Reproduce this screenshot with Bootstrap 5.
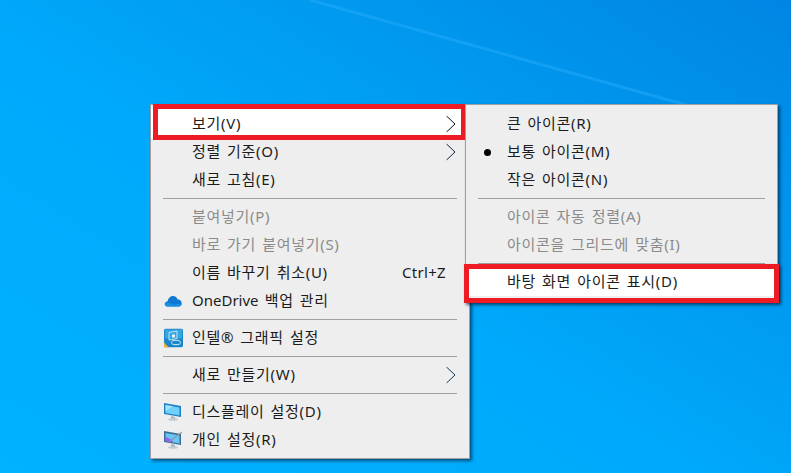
<!DOCTYPE html>
<html lang="ko">
<head>
    <meta charset="UTF-8">
    <meta name="viewport" content="width=device-width, initial-scale=1.0">
    <title>바탕 화면 아이콘 표시</title>
    <link href="https://cdn.jsdelivr.net/npm/bootstrap@5.3.0/dist/css/bootstrap.min.css" rel="stylesheet">
    <style>
        html, body {
            height: 100%;
            overflow: hidden;
        }
        body {
            font-family: "Noto Sans", "Noto Sans CJK KR", sans-serif;
        }
        .desk {
            position: relative;
            width: 791px;
            height: 473px;
            overflow: hidden;
            background: linear-gradient(32deg, #00b2ff 0%, #00a9fb 45%, #0098ee 72%, #0085e3 100%);
        }
        .desk-ray {
            position: absolute;
            inset: 0;
        }
        /* контекстное меню */
        .ctx-menu {
            --bs-dropdown-min-width: 0;
            --bs-dropdown-padding-x: 0;
            --bs-dropdown-padding-y: 4px;
            --bs-dropdown-border-radius: 0;
            --bs-dropdown-border-color: #a0a0a0;
            --bs-dropdown-bg: #eeeeee;
            --bs-dropdown-font-size: 15px;
            position: absolute;
            top: 104px;
            margin: 0;
            box-shadow: 2px 2px 3px rgba(0, 30, 60, .65);
        }
        .ctx-main {
            left: 150px;
            width: 320px;
        }
        .ctx-sub {
            left: 465px;
            width: 313px;
        }
        .ctx-item {
            position: relative;
            height: 28px;
            padding: 0 13px 0 41px;
            color: #1c1c1c;
            line-height: 26px;
            letter-spacing: .7px;
            word-spacing: 1.5px;
            white-space: pre;
        }
        .ctx-item.first-row {
            height: 29px;
            padding-top: 1px;
        }
        .ctx-item.off {
            color: #8b8b8b;
        }
        .ctx-sep {
            height: 1px;
            margin: 4px 12px;
            background: #a0a0a0;
            opacity: 1;
            border: 0;
        }
        .ctx-icon {
            position: absolute;
            left: 13px;
            top: 50%;
            transform: translateY(-50%);
        }
        .ctx-arrow {
            position: absolute;
            right: 13px;
            top: 50%;
            transform: translateY(-50%);
        }
        .latin-run {
            letter-spacing: 0;
        }
        .shortcut {
            margin-left: auto;
            margin-right: 10px;
            letter-spacing: .3px;
        }
        .dot-mark {
            position: absolute;
            left: 18px;
            top: 11px;
            width: 7px;
            height: 7px;
            border-radius: 50%;
            background: #000;
        }
        /* красные рамки поверх пунктов */
        .hot {
            background: #fff;
        }
        .hot::after {
            content: "";
            position: absolute;
            border: 5px solid #ed1c24;
            pointer-events: none;
        }
        .hot-view::after {
            inset: -5px 3px -2px 2px;
        }
        .hot-show::after {
            inset: -4px -2px -7px -2px;
            box-shadow: 2px 2px 3px rgba(0, 30, 60, .6);
        }
    </style>
</head>
<body>
    <div class="desk">
        <svg class="desk-ray" width="791" height="473" viewBox="0 0 791 473">
            <line x1="310" y1="0" x2="690" y2="106" stroke="#2fb2ff" stroke-width="3" opacity=".4"/>
        </svg>

        <!-- Основное меню -->
        <div class="dropdown-menu d-block ctx-menu ctx-main">
            <div class="ctx-item first-row d-flex hot hot-view"><span>보기(V)</span>
                <svg class="ctx-arrow" width="10" height="17" viewBox="0 0 10 17"><path d="M.5.5 9 8.500.5 16.500" fill="none" stroke="#111" stroke-width="1"/></svg>
            </div>
            <div class="ctx-item d-flex"><span>정렬 기준(O)</span>
                <svg class="ctx-arrow" width="10" height="17" viewBox="0 0 10 17"><path d="M.5.5 9 8.500.5 16.500" fill="none" stroke="#14233f" stroke-width="1"/></svg>
            </div>
            <div class="ctx-item d-flex"><span>새로 고침(E)</span></div>
            <hr class="ctx-sep">
            <div class="ctx-item d-flex off"><span>붙여넣기(P)</span></div>
            <div class="ctx-item d-flex off"><span>바로 가기 붙여넣기(S)</span></div>
            <div class="ctx-item d-flex"><span>이름 바꾸기 취소(U)</span><span class="shortcut">Ctrl+Z</span></div>
            <div class="ctx-item d-flex">
                <svg class="ctx-icon" width="18" height="12" viewBox="0 0 18 12">
                    <path d="M3.500 11.500C1.500 11.500.5 10 .8 8.600 1.100 7.200 2.300 6.500 3.500 6.600 4 3.600 6.200 1 9 1c2.200 0 4 1.300 4.700 3.500 2.300-.2 3.800 1.700 4 3.500.2 2-1 3.500-3 3.500z" fill="#0f78d4"/>
                    <path d="M3.500 11.500C1.500 11.500.5 10 .8 8.600c2.500-1.500 6-.8 8 1.300 2-1 5-1.200 8.800-.7-.4 1.300-1.500 2.300-3.200 2.300z" fill="#1a8fe3"/>
                </svg>
                <span><span class="latin-run">OneDrive</span> 백업 관리</span>
            </div>
            <hr class="ctx-sep">
            <div class="ctx-item d-flex">
                <svg class="ctx-icon" width="19" height="19" viewBox="0 0 19 19">
                    <rect width="19" height="19" rx="2" fill="#1b86c9"/>
                    <rect x="1" y="1" width="17" height="9" fill="#35a6e0"/>
                    <path d="M0 14 5 19H0z" fill="#f0b030"/>
                    <path d="M5 4 13 2.500V10L5 11.500z" fill="none" stroke="#bfe6f8" stroke-width="1"/>
                    <path d="M8 6h3v3H8z" fill="#e3f4fc"/>
                    <ellipse cx="12" cy="14" rx="4.500" ry="2.200" fill="none" stroke="#cfeefb" stroke-width="1"/>
                </svg>
                <span>인텔® 그래픽 설정</span>
            </div>
            <hr class="ctx-sep">
            <div class="ctx-item d-flex"><span>새로 만들기(W)</span>
                <svg class="ctx-arrow" width="10" height="17" viewBox="0 0 10 17"><path d="M.5.5 9 8.500.5 16.500" fill="none" stroke="#0b3a5c" stroke-width="1"/></svg>
            </div>
            <hr class="ctx-sep">
            <div class="ctx-item d-flex">
                <svg class="ctx-icon" width="18" height="18" viewBox="0 0 18 18">
                    <path d="M0 0 17 3V14L0 11z" fill="#1f7fc4"/>
                    <path d="M1.500 2 15.500 4.500V12.500L1.500 10z" fill="#6fd0fb"/>
                    <path d="M1.500 2 9 3.300 1.500 8z" fill="#a5e4fd"/>
                    <path d="M7 13 11 14V16H7z" fill="#a9b3ba"/>
                    <ellipse cx="9" cy="16.500" rx="5" ry="1.300" fill="#c4ccd2"/>
                </svg>
                <span>디스플레이 설정(D)</span>
            </div>
            <div class="ctx-item d-flex">
                <svg class="ctx-icon" width="18" height="18" viewBox="0 0 18 18">
                    <path d="M0 0 17 3V14L0 11z" fill="#3d6f96"/>
                    <path d="M1.500 2 15.500 4.500V12.500L1.500 10z" fill="#68c6f4"/>
                    <path d="M1.500 6 8 9.500 1.500 10z" fill="#7a3ff0"/>
                    <path d="M1.500 10 10 11.500 8 9.500 1.500 6z" fill="#9a5cf5"/>
                    <path d="M6 10 18 1" stroke="#8a9aa5" stroke-width="1.200"/>
                    <path d="M7 13 11 14V16H7z" fill="#a9b3ba"/>
                    <ellipse cx="9" cy="16.500" rx="5" ry="1.300" fill="#c4ccd2"/>
                </svg>
                <span>개인 설정(R)</span>
            </div>
        </div>

        <!-- Подменю "보기" -->
        <div class="dropdown-menu d-block ctx-menu ctx-sub">
            <div class="ctx-item first-row d-flex"><span>큰 아이콘(R)</span></div>
            <div class="ctx-item d-flex"><span class="dot-mark"></span><span>보통 아이콘(M)</span></div>
            <div class="ctx-item d-flex"><span>작은 아이콘(N)</span></div>
            <hr class="ctx-sep">
            <div class="ctx-item d-flex off"><span>아이콘 자동 정렬(A)</span></div>
            <div class="ctx-item d-flex off"><span>아이콘을 그리드에 맞춤(I)</span></div>
            <hr class="ctx-sep">
            <div class="ctx-item d-flex hot hot-show"><span>바탕 화면 아이콘 표시(D)</span></div>
        </div>
    </div>

    <script src="https://cdn.jsdelivr.net/npm/bootstrap@5.3.0/dist/js/bootstrap.bundle.min.js"></script>
</body>
</html>
